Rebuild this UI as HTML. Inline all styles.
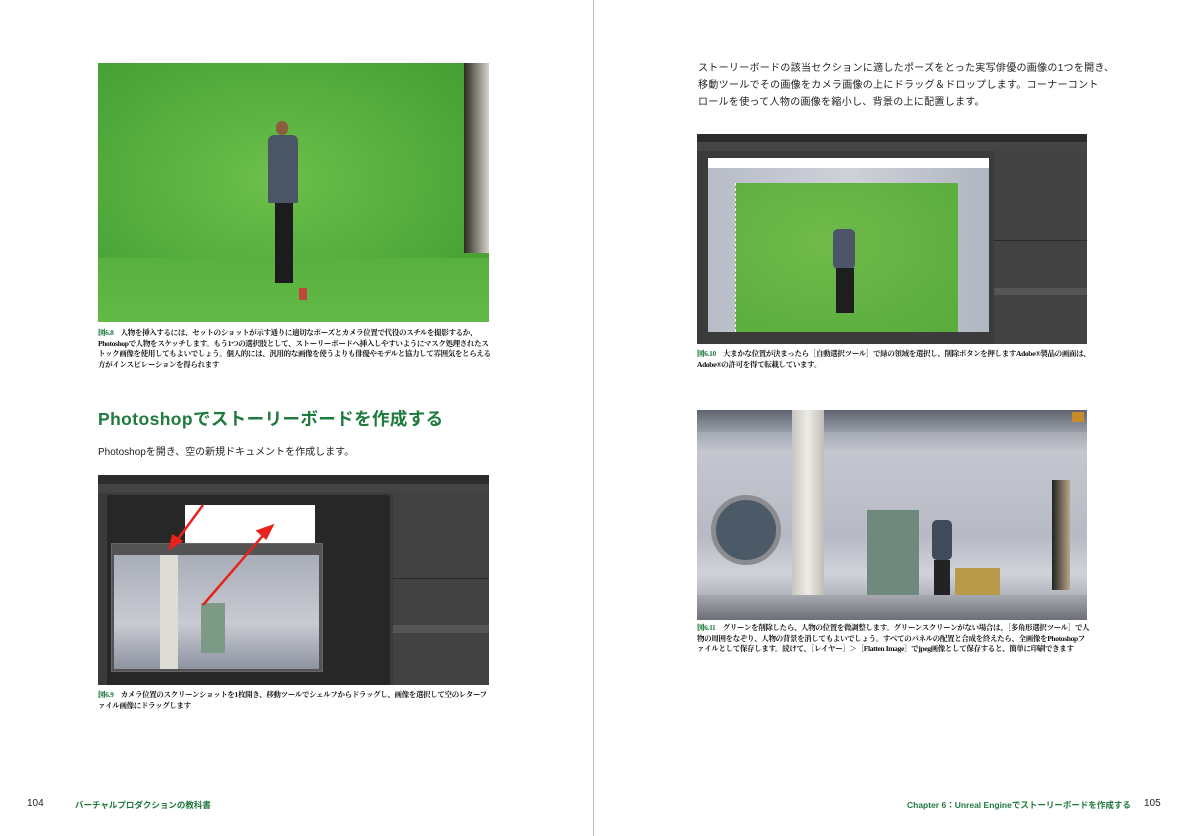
<!DOCTYPE html>
<html><head><meta charset="utf-8"><style>
*{margin:0;padding:0;box-sizing:border-box}
body{width:1186px;height:836px;background:#fff;position:relative;overflow:hidden;font-family:"Liberation Sans","Noto Sans CJK JP",sans-serif;color:#222}
.a{position:absolute}
.cap{font-family:"Liberation Serif","Noto Serif CJK SC",serif;font-size:7.5px;line-height:10.5px;color:#111;font-weight:bold;letter-spacing:-0.35px}
.cap b{color:#1f7a3e}
.ps{background:#3b3b3b;overflow:hidden}
</style></head><body>
<div class="a" style="left:593px;top:0;width:1px;height:836px;background:#bbb"></div>

<!-- Fig 6.8 -->
<div class="a" style="left:98px;top:63px;width:391px;height:259px;background:radial-gradient(ellipse at 45% 45%,#6cc04a,#4fa83a 60%,#3f9a30);overflow:hidden">
 <div class="a" style="left:0;top:195px;width:391px;height:64px;background:linear-gradient(#58b03e,#62b946)"></div>
 <div class="a" style="left:366px;top:0;width:25px;height:190px;background:linear-gradient(90deg,#2a2a20,#d8d4cc)"></div>
 <div class="a" style="left:178px;top:58px;width:12px;height:14px;border-radius:6px;background:#8a5e3c"></div>
 <div class="a" style="left:170px;top:72px;width:30px;height:68px;background:#4a5566;border-radius:6px 6px 2px 2px"></div>
 <div class="a" style="left:177px;top:140px;width:18px;height:80px;background:#1c1c1e"></div>
 <div class="a" style="left:201px;top:225px;width:8px;height:12px;background:#c0463c"></div>
</div>
<div class="a cap" style="left:98px;top:328px;width:394px">
<b>図6.8</b>　人物を挿入するには、セットのショットが示す通りに適切なポーズとカメラ位置で代役のスチルを撮影するか、Photoshopで人物をスケッチします。もう1つの選択肢として、ストーリーボードへ挿入しやすいようにマスク処理されたストック画像を使用してもよいでしょう。個人的には、汎用的な画像を使うよりも俳優やモデルと協力して雰囲気をとらえる方がインスピレーションを得られます</div>

<div class="a" style="left:98px;top:406px;font-size:17.5px;font-weight:bold;color:#1f7a3e;letter-spacing:0.4px;white-space:nowrap">Photoshopでストーリーボードを作成する</div>
<div class="a" style="left:98px;top:443px;font-size:10px;white-space:nowrap">Photoshopを開き、空の新規ドキュメントを作成します。</div>

<!-- Fig 6.9 -->
<div class="a ps" style="left:98px;top:475px;width:391px;height:210px">
 <div class="a" style="left:0;top:0;width:391px;height:9px;background:#2c2c2c"></div>
 <div class="a" style="left:0;top:9px;width:391px;height:9px;background:#444"></div>
 <div class="a" style="left:0;top:18px;width:8px;height:192px;background:#3a3a3a"></div>
 <div class="a" style="left:9px;top:20px;width:283px;height:190px;background:#272727"></div>
 <div class="a" style="left:87px;top:30px;width:130px;height:38px;background:#fff"></div>
 <div class="a" style="left:13px;top:68px;width:212px;height:129px;background:#535353;border:1px solid #666"></div>
 <div class="a" style="left:16px;top:80px;width:205px;height:114px;background:linear-gradient(#a8adb8,#c9cbd3 60%,#8d93a0)"></div>
 <div class="a" style="left:62px;top:80px;width:18px;height:114px;background:#dedcd6"></div>
 <div class="a" style="left:103px;top:128px;width:24px;height:50px;background:#7d9a86"></div>
 <div class="a" style="left:295px;top:18px;width:96px;height:192px;background:#424242"></div>
 <div class="a" style="left:295px;top:103px;width:96px;height:1px;background:#2a2a2a"></div>
 <div class="a" style="left:295px;top:150px;width:96px;height:8px;background:#555"></div>
 <svg class="a" style="left:60px;top:25px" width="160" height="110"><g stroke="#e8231c" stroke-width="2.5" fill="#e8231c"><line x1="45" y1="5" x2="17" y2="43"/><polygon points="12,48 15,36 23,41"/><line x1="45" y1="105" x2="108" y2="32"/><polygon points="114,26 100,31 108,38"/></g></svg>
</div>
<div class="a cap" style="left:98px;top:690px;width:394px"><b>図6.9</b>　カメラ位置のスクリーンショットを1枚開き、移動ツールでシェルフからドラッグし、画像を選択して空のレターファイル画像にドラッグします</div>

<div class="a" style="left:27px;top:798px;font-size:10px">104</div>
<div class="a" style="left:75px;top:799px;font-size:8.5px;color:#1f7a3e;font-weight:bold">バーチャルプロダクションの教科書</div>

<!-- right page -->
<div class="a" style="left:698px;top:60px;font-size:10px;line-height:17px;letter-spacing:0.3px;white-space:nowrap">ストーリーボードの該当セクションに適したポーズをとった実写俳優の画像の1つを開き、<br>移動ツールでその画像をカメラ画像の上にドラッグ＆ドロップします。コーナーコント<br>ロールを使って人物の画像を縮小し、背景の上に配置します。</div>

<!-- Fig 6.10 -->
<div class="a ps" style="left:697px;top:134px;width:390px;height:210px">
 <div class="a" style="left:0;top:0;width:390px;height:8px;background:#2c2c2c"></div>
 <div class="a" style="left:0;top:8px;width:390px;height:9px;background:#454545"></div>
 <div class="a" style="left:11px;top:24px;width:281px;height:10px;background:#fff"></div>
 <div class="a" style="left:11px;top:34px;width:281px;height:164px;background:linear-gradient(90deg,#b7bcc8,#cfd1d8 50%,#b0b6c2)"></div>
 <div class="a" style="left:38px;top:49px;width:223px;height:149px;background:radial-gradient(ellipse at 40% 40%,#6fba4a,#58ab3c);border-left:1px dashed #fff"></div>
 <div class="a" style="left:136px;top:95px;width:22px;height:40px;background:#4c5668;border-radius:5px"></div>
 <div class="a" style="left:139px;top:134px;width:18px;height:45px;background:#1e1e1e"></div>
 <div class="a" style="left:297px;top:17px;width:93px;height:193px;background:#424242"></div>
 <div class="a" style="left:297px;top:106px;width:93px;height:1px;background:#2a2a2a"></div>
 <div class="a" style="left:297px;top:154px;width:93px;height:7px;background:#555"></div>
</div>
<div class="a cap" style="left:697px;top:349px;width:394px"><b>図6.10</b>　大まかな位置が決まったら［自動選択ツール］で緑の領域を選択し、削除ボタンを押しますAdobe®製品の画面は、Adobe®の許可を得て転載しています。</div>

<!-- Fig 6.11 -->
<div class="a" style="left:697px;top:410px;width:390px;height:210px;overflow:hidden;background:linear-gradient(#7f8590,#c4c7cf 20%,#b7bac4 60%,#d0d3da 78%,#8f919a)">
 <div class="a" style="left:0;top:0;width:390px;height:22px;background:linear-gradient(#5e646f,#9a9ea8)"></div>
 <div class="a" style="left:95px;top:0;width:32px;height:210px;background:linear-gradient(90deg,#c8c6c0,#eeece6,#bfbdb6)"></div>
 <div class="a" style="left:14px;top:85px;width:70px;height:70px;border-radius:50%;background:#4b5a66;border:5px solid #8a8c90"></div>
 <div class="a" style="left:170px;top:100px;width:52px;height:100px;background:#6f8a7c"></div>
 <div class="a" style="left:258px;top:158px;width:45px;height:40px;background:#b79a4a"></div>
 <div class="a" style="left:235px;top:110px;width:20px;height:40px;background:#3f4a5a;border-radius:5px"></div>
 <div class="a" style="left:237px;top:150px;width:16px;height:50px;background:#232323"></div>
 <div class="a" style="left:355px;top:70px;width:18px;height:110px;background:linear-gradient(90deg,#222,#b8a888)"></div>
 <div class="a" style="left:0;top:185px;width:390px;height:25px;background:linear-gradient(#a7a9b0,#6c6f78)"></div>
 <div class="a" style="left:375px;top:2px;width:12px;height:10px;background:#c98a2a"></div>
</div>
<div class="a cap" style="left:697px;top:623px;width:394px"><b>図6.11</b>　グリーンを削除したら、人物の位置を微調整します。グリーンスクリーンがない場合は、［多角形選択ツール］で人物の周囲をなぞり、人物の背景を消してもよいでしょう。すべてのパネルの配置と合成を終えたら、全画像をPhotoshopファイルとして保存します。続けて、［レイヤー］＞［Flatten Image］でjpeg画像として保存すると、簡単に印刷できます</div>

<div class="a" style="left:907px;top:799px;font-size:8.5px;color:#1f7a3e;font-weight:bold;white-space:nowrap">Chapter 6：Unreal Engineでストーリーボードを作成する</div>
<div class="a" style="left:1144px;top:798px;font-size:10px">105</div>
</body></html>
